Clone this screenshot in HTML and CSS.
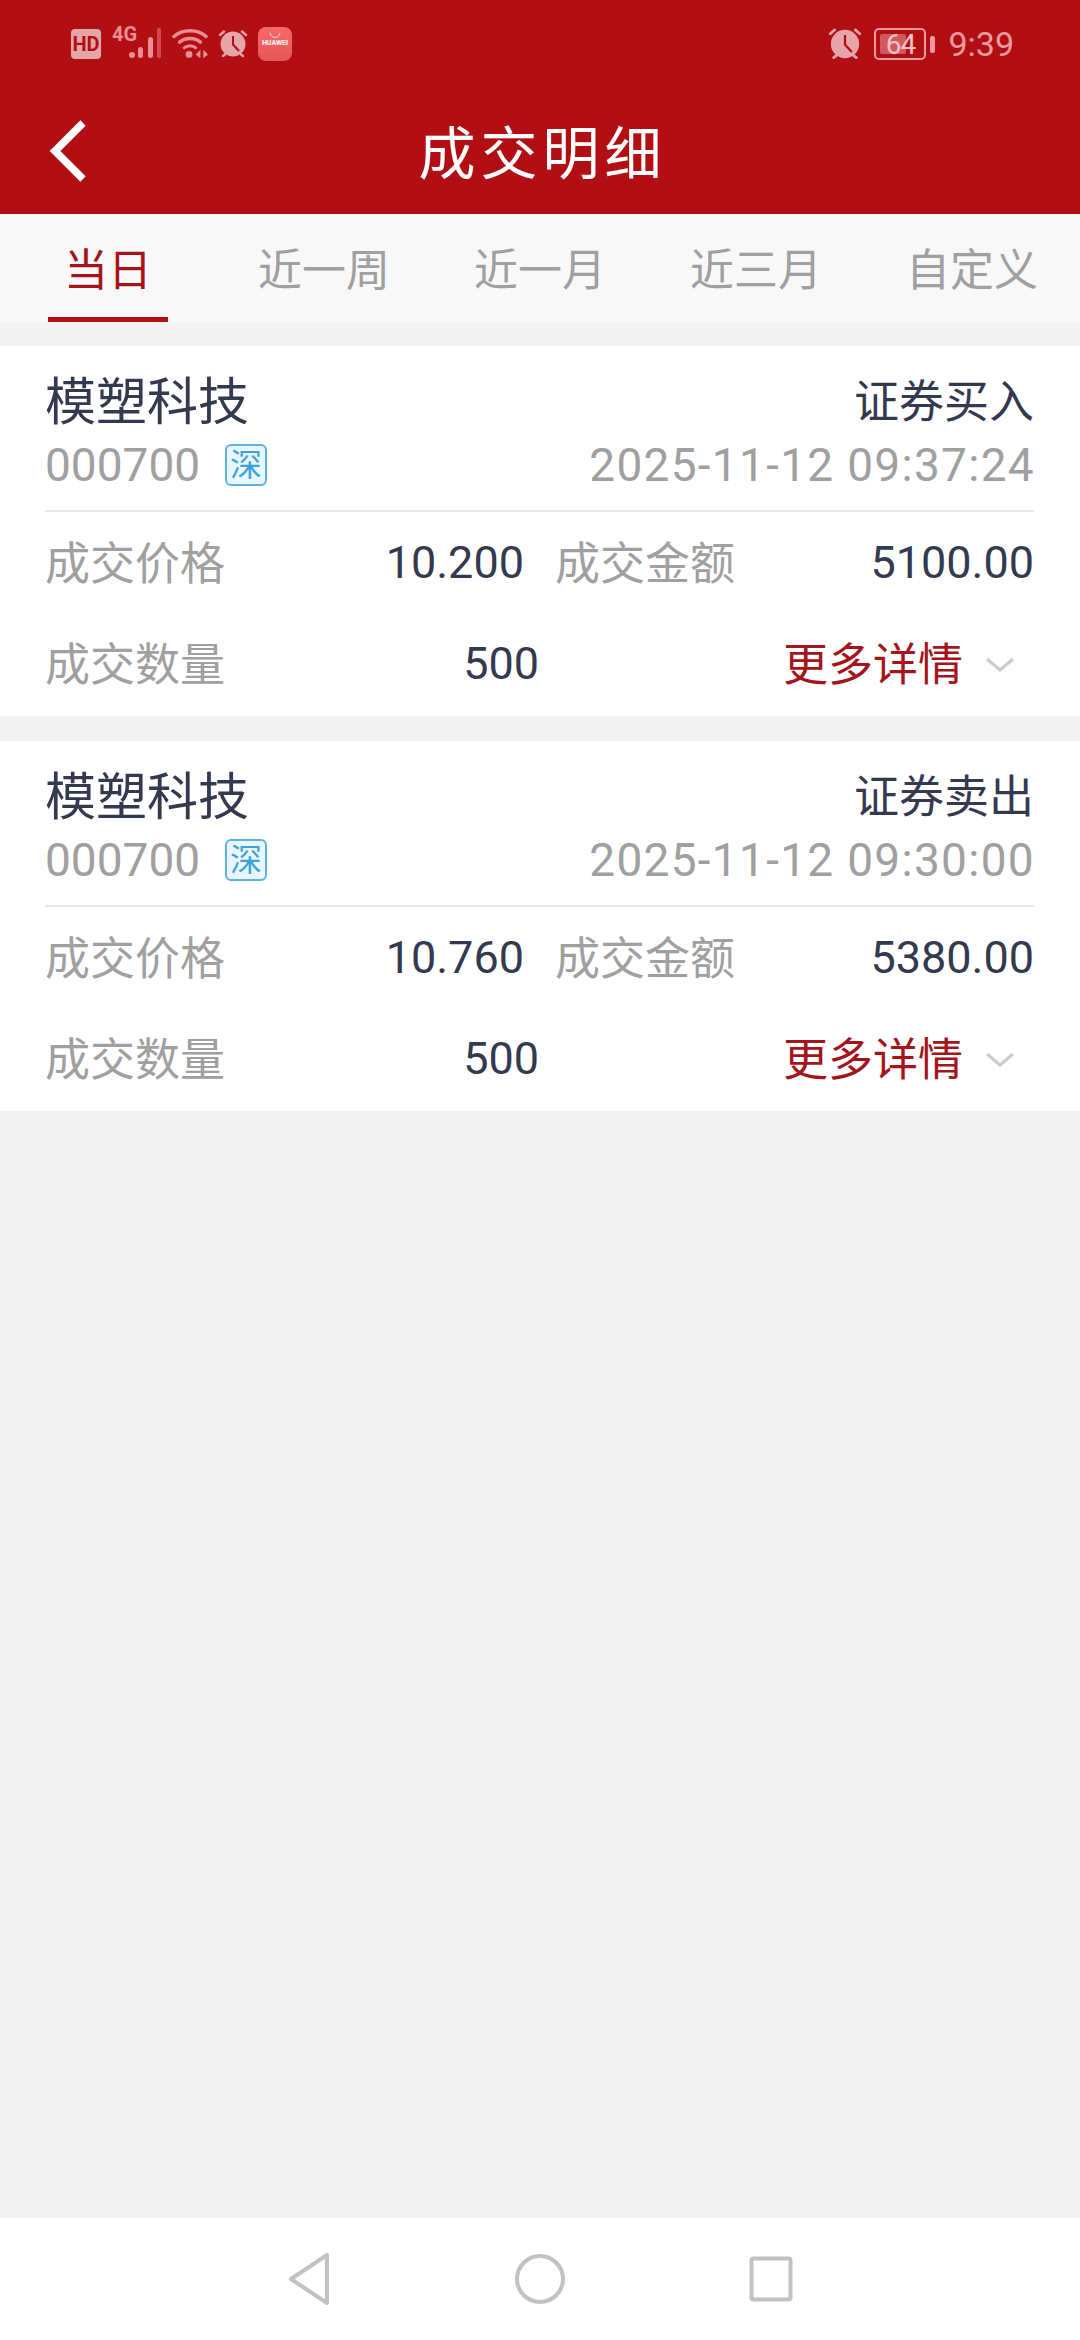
FILE: index.html
```html
<!DOCTYPE html>
<html lang="zh-CN">
<head>
    <meta charset="UTF-8">
    <title>成交明细</title>
    <link rel="stylesheet" href="styles.css">
</head>
<body>
    <div class="app">
        <header class="top">
            <div class="status">
                <div class="status-left">
                    <svg class="ic-hd" width="30" height="30" viewBox="0 0 30 30"><rect width="30" height="30" rx="4" fill="#e6a5a9"/><text x="15" y="22" text-anchor="middle" class="hd-text">HD</text></svg>
                    <span class="net">4G</span>
                    <svg class="ic-signal" width="34" height="32" viewBox="0 0 34 32"><g fill="#e98d92"><circle cx="4" cy="27" r="3"/><rect x="10" y="19" width="5" height="11" rx="2.5"/><rect x="20" y="9" width="5" height="21" rx="2.5"/></g><rect x="29" y="0" width="4" height="30" rx="1.5" fill="#cf4a50"/></svg>
                    <svg class="ic-wifi" width="36" height="32" viewBox="0 0 38 32"><g fill="none" stroke="#e98d92" stroke-width="3.6" stroke-linecap="round"><path d="M2 8 C 11 0, 27 0, 36 8"/><path d="M8 14 C 14 9, 24 9, 30 14"/></g><path d="M13 20 C 16 17, 22 17, 25 20" fill="none" stroke="#e98d92" stroke-width="3.2" stroke-linecap="round"/><circle cx="18" cy="27" r="3.6" fill="#e98d92"/><path d="M30 22 V31 L25 27 Z M33 22 L38 27 L33 31 Z" fill="#e98d92"/></svg>
                    <svg class="ic-alarm" width="30" height="30" viewBox="0 0 30 30"><circle cx="15" cy="15" r="12.5" fill="#e6a5a9"/><path d="M15 7 V15.5 L21 22" fill="none" stroke="#b20f15" stroke-width="2"/><path d="M2 6 L6 2.5 M28 6 L24 2.5 M5 27 L7.5 25 M25 27 L22.5 25" stroke="#e6a5a9" stroke-width="2.4" stroke-linecap="round"/></svg>
                    <div class="ic-store"><svg width="14" height="7" viewBox="0 0 14 7"><path d="M2 1 C 3 7, 11 7, 12 1" fill="none" stroke="#fbe0e0" stroke-width="1"/></svg><span>HUAWEI</span></div>
                </div>
                <div class="status-right">
                    <svg class="ic-alarm" width="34" height="34" viewBox="0 0 30 30"><circle cx="15" cy="15" r="12.5" fill="#e6a5a9"/><path d="M15 7 V15.5 L21 22" fill="none" stroke="#b20f15" stroke-width="2"/><path d="M2 6 L6 2.5 M28 6 L24 2.5 M5 27 L7.5 25 M25 27 L22.5 25" stroke="#e6a5a9" stroke-width="2.4" stroke-linecap="round"/></svg>
                    <div class="battery">
                        <div class="battery-body"><div class="battery-fill"></div><span class="battery-num">64</span></div>
                        <div class="battery-tip"></div>
                    </div>
                    <span class="clock">9:39</span>
                </div>
            </div>
            <div class="titlebar">
                <svg class="back" width="40" height="64" viewBox="0 0 40 64"><path d="M36 4 L8 32 L36 60" fill="none" stroke="#fff" stroke-width="7.5"/></svg>
                <h1>成交明细</h1>
            </div>
        </header>

        <nav class="tabs">
            <a class="tab active">当日</a>
            <a class="tab">近一周</a>
            <a class="tab">近一月</a>
            <a class="tab">近三月</a>
            <a class="tab">自定义</a>
        </nav>

        <main class="list">
            <section class="card">
                <div class="card-head">
                    <div class="head-row">
                        <span class="name">模塑科技</span>
                        <span class="trade-type">证券买入</span>
                    </div>
                    <div class="head-row">
                        <span class="code">000700 <i class="mkt">深</i></span>
                        <span class="time">2025-11-12 09:37:24</span>
                    </div>
                </div>
                <div class="rows">
                    <div class="row">
                        <span class="label">成交价格</span><span class="val val-price">10.200</span>
                        <span class="label label-b">成交金额</span><span class="val val-amt">5100.00</span>
                    </div>
                    <div class="row">
                        <span class="label">成交数量</span><span class="val val-qty">500</span>
                        <span class="more">更多详情<svg width="30" height="16" viewBox="0 0 30 16"><path d="M2 2 L15 13 L28 2" fill="none" stroke="#c9ccd2" stroke-width="3"/></svg></span>
                    </div>
                </div>
            </section>

            <section class="card">
                <div class="card-head">
                    <div class="head-row">
                        <span class="name">模塑科技</span>
                        <span class="trade-type">证券卖出</span>
                    </div>
                    <div class="head-row">
                        <span class="code">000700 <i class="mkt">深</i></span>
                        <span class="time">2025-11-12 09:30:00</span>
                    </div>
                </div>
                <div class="rows">
                    <div class="row">
                        <span class="label">成交价格</span><span class="val val-price">10.760</span>
                        <span class="label label-b">成交金额</span><span class="val val-amt">5380.00</span>
                    </div>
                    <div class="row">
                        <span class="label">成交数量</span><span class="val val-qty">500</span>
                        <span class="more">更多详情<svg width="30" height="16" viewBox="0 0 30 16"><path d="M2 2 L15 13 L28 2" fill="none" stroke="#c9ccd2" stroke-width="3"/></svg></span>
                    </div>
                </div>
            </section>
        </main>

        <footer class="navbar">
            <svg width="43" height="54" viewBox="0 0 43 54"><path d="M39 3 V51 L3 27 Z" fill="none" stroke="#c2c2c2" stroke-width="4" stroke-linejoin="round"/></svg>
            <svg width="50" height="50" viewBox="0 0 50 50"><ellipse cx="25" cy="25" rx="23" ry="23" fill="none" stroke="#c2c2c2" stroke-width="4"/></svg>
            <svg width="44" height="46" viewBox="0 0 44 46"><rect x="2.5" y="2.5" width="39" height="41" rx="2" fill="none" stroke="#c2c2c2" stroke-width="4"/></svg>
        </footer>
    </div>
</body>
</html>
```

FILE: styles.css
```css
* { box-sizing: border-box; }
html, body { margin: 0; padding: 0; }
body { font-family: "Roboto", "Noto Sans CJK SC", sans-serif; background-color: #f2f2f2; }
.app { width: 1080px; height: 2340px; display: flex; flex-direction: column; overflow: hidden; }

.top { background-color: #b20f15; height: 214px; color: #fff; }
.status { height: 86px; display: flex; justify-content: space-between; align-items: center; padding: 2px 66px 0 71px; }
.status-left, .status-right { display: flex; align-items: center; }
.status-left { gap: 10px; }
.hd-text { font-family: "Roboto", sans-serif; font-size: 20px; font-weight: 700; fill: #b20f15; }
.net { font-family: "Liberation Sans Narrow", "Roboto", sans-serif; font-size: 20px; line-height: 20px; font-weight: 700; color: #e98d92; width: 16px; align-self: flex-start; margin: -3px -10px 0 1px; }
.ic-store { width: 34px; height: 34px; border-radius: 8px; background: linear-gradient(#f56a68, #e8555a); display: flex; flex-direction: column; align-items: center; color: #fff; padding-top: 5px; }
.ic-store span { font-size: 7px; font-weight: 700; line-height: 9px; white-space: nowrap; }
.status-right { gap: 12px; color: #eb9a9e; }
.battery { display: flex; align-items: center; gap: 4px; margin-right: 1px; }
.battery-body { position: relative; width: 52px; height: 32px; border: 2px solid #eb9a9e; border-radius: 5px; padding: 4px; }
.battery-fill { width: 64%; height: 100%; background-color: #d2595f; border-radius: 2px; }
.battery-num { position: absolute; left: 0; right: 0; top: 0; text-align: center; font-size: 28px; line-height: 29px; letter-spacing: -1px; color: #f2c4c6; }
.battery-tip { width: 5px; height: 17px; background-color: #eb9a9e; border-radius: 2px; }
.clock { font-size: 34px; }

.titlebar { position: relative; height: 128px; display: flex; align-items: center; justify-content: center; }
.back { position: absolute; left: 47px; top: 33px; }
.titlebar h1 { margin: 0; font-size: 57px; font-weight: 400; letter-spacing: 5px; line-height: 1; padding: 8px 0 0 5px; }

.tabs { height: 108px; background-color: #f8f8f8; display: flex; }
.tab { flex: 1; display: flex; justify-content: center; align-items: center; font-size: 44px; color: #a0a0a0; position: relative; padding-bottom: 2px; }
.tab.active { color: #a5141b; }
.tab.active::after { content: ""; position: absolute; left: 48px; width: 120px; bottom: 0; height: 5px; background-color: #b20f15; }

.list { flex: 1; padding-top: 24px; display: flex; flex-direction: column; gap: 25px; }
.card { background-color: #fff; height: 370px; padding: 0 46px 0 45px; }
.card-head { height: 166px; border-bottom: 2px solid #e8e8e8; padding-top: 20px; }
.head-row { display: flex; justify-content: space-between; align-items: center; height: 66px; }
.name { font-size: 51px; line-height: 1; padding-top: 6px; color: #33394f; }
.trade-type { font-size: 45px; line-height: 1; padding-top: 6px; color: #33394f; }
.code { font-size: 46px; line-height: 1; color: #a0a0a0; display: flex; align-items: center; gap: 25px; }
.mkt { font-style: normal; font-size: 32px; line-height: 38px; width: 42px; height: 42px; text-align: center; color: #3ba3dc; background-color: #eaf6fd; border: 2px solid #5db2e0; border-radius: 6px; }
.time { font-size: 46px; line-height: 1; letter-spacing: 1.3px; margin-right: -1px; color: #a0a0a0; }

.rows { display: flex; flex-direction: column; }
.row { height: 101px; display: flex; align-items: center; }
.label { font-size: 45px; line-height: 1; padding-top: 3px; color: #a0a0a0; flex: 0 0 auto; }
.val { font-size: 45px; line-height: 1; color: #33394f; }
.val-price, .val-amt { flex: 1; text-align: right; }
.label-b { margin-left: 31px; }
.val-qty { flex: 0 0 314px; text-align: right; }
.more { margin-left: auto; font-size: 45px; line-height: 1; padding-top: 3px; color: #a5141b; display: flex; align-items: center; gap: 22px; padding-right: 19px; }

.navbar { height: 122px; background-color: #fff; display: flex; align-items: center; justify-content: center; gap: 184px; }
```
